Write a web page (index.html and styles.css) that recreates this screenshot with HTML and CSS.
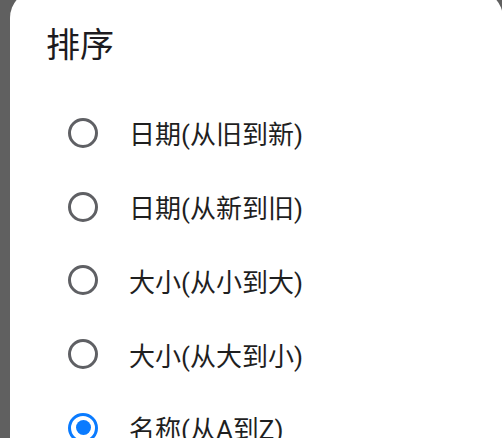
FILE: index.html
```html
<!DOCTYPE html>
<html lang="zh-CN">
<head>
<meta charset="utf-8">
<link rel="stylesheet" href="styles.css">
</head>
<body>
<div class="dialog">
  <h1 class="title">排序</h1>
  <ul class="options">
    <li class="option"><span class="radio"></span><span class="label">日期(从旧到新)</span></li>
    <li class="option"><span class="radio"></span><span class="label">日期(从新到旧)</span></li>
    <li class="option"><span class="radio"></span><span class="label">大小(从小到大)</span></li>
    <li class="option"><span class="radio"></span><span class="label">大小(从大到小)</span></li>
    <li class="option"><span class="radio checked"></span><span class="label">名称(从A到Z)</span></li>
  </ul>
</div>
</body>
</html>
```

FILE: styles.css
```css
html, body {
  margin: 0;
  padding: 0;
  height: 100%;
  overflow: hidden;
  background: #606060;
}
body {
  font-family: Roboto, "Noto Sans CJK SC", sans-serif;
}
.dialog {
  margin: -10px 0 0 10px;
  width: 493px;
  height: 600px;
  background: #fff;
  border-radius: 28px;
  box-sizing: border-box;
  padding: 35px 0 0 36px;
}
.title {
  margin: 0;
  font-size: 34px;
  font-weight: 400;
  line-height: 40px;
  color: #1d1b20;
}
.options {
  list-style: none;
  margin: 31px 0 0 0;
  padding: 0;
}
.option {
  display: flex;
  align-items: center;
  height: 73.75px;
  padding-left: 22px;
}
.radio {
  width: 30px;
  height: 30px;
  box-sizing: border-box;
  border: 3px solid #5f6064;
  border-radius: 50%;
  flex: none;
  display: flex;
  align-items: center;
  justify-content: center;
}
.radio.checked {
  border-color: #0a7bff;
}
.radio.checked::after {
  content: "";
  width: 15px;
  height: 15px;
  border-radius: 50%;
  background: #0a7bff;
}
.label {
  margin-left: 31px;
  font-size: 26px;
  color: #1f1f1f;
}
```
